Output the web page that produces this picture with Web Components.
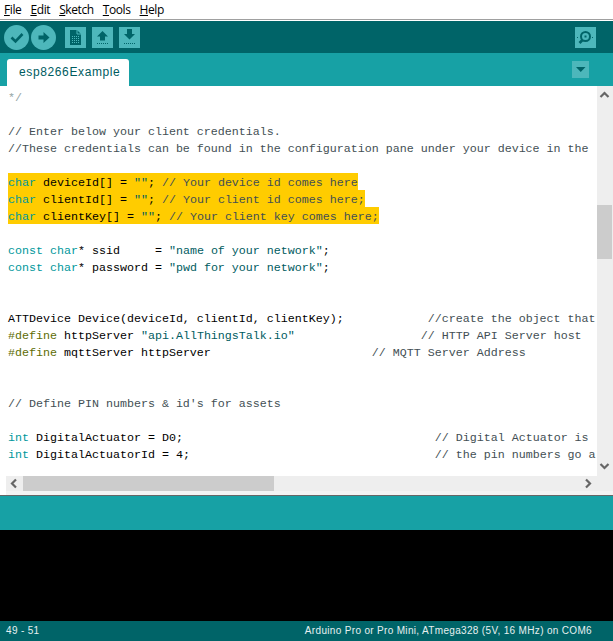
<!DOCTYPE html>
<html>
<head>
<meta charset="utf-8">
<title>esp8266Example</title>
<style>
  html, body { margin: 0; padding: 0; background: #fff; overflow: hidden; }
  arduino-ide { display: flex; }
  u { text-underline-offset: 1px; }
</style>
</head>
<body>
<arduino-ide>
  <ide-menubar>
    <ide-menu><u>F</u>ile</ide-menu>
    <ide-menu><u>E</u>dit</ide-menu>
    <ide-menu><u>S</u>ketch</ide-menu>
    <ide-menu><u>T</u>ools</ide-menu>
    <ide-menu><u>H</u>elp</ide-menu>
  </ide-menubar>
  <ide-toolbar></ide-toolbar>
  <ide-tabs>esp8266Example</ide-tabs>
  <ide-editor></ide-editor>
  <ide-hscroll></ide-hscroll>
  <ide-message></ide-message>
  <ide-console></ide-console>
  <ide-status>
    <span>49 - 51</span>
    <span slot="board">Arduino Pro or Pro Mini, ATmega328 (5V, 16 MHz) on COM6</span>
  </ide-status>
</arduino-ide>

<script>
const define = (name, css, html) => {
  customElements.define(name, class extends HTMLElement {
    constructor() {
      super();
      this.attachShadow({ mode: 'open' }).innerHTML = `<style>${css}</style>${html}`;
    }
  });
};

define('arduino-ide', `
  :host { display: flex; flex-direction: column; width: 613px; height: 641px; overflow: hidden; }
`, `<slot></slot>`);

define('ide-menubar', `
  :host {
    display: flex; gap: 9px; height: 19px; padding-left: 4px; box-sizing: content-box;
    background: #fff; color: #000; border-bottom: 1px solid #a0a0a0;
    font: 12px/19px "Open Sans", "Noto Sans", sans-serif; letter-spacing: -.4px;
  }
`, `<slot></slot>`);

define('ide-menu', `:host { display: block; }`, `<slot></slot>`);

const toolBtn = `
  .btn { width: 21px; height: 21px; background: #4db7bb; display: block; flex: none; }
  .round { width: 25px; height: 25px; display: block; flex: none; }
`;

define('ide-toolbar', toolBtn + `
  :host {
    display: flex; align-items: center; height: 32px; margin-top: 1px;
    padding: 0 17px 0 4px; background: #006468;
  }
  .r2 { margin-left: 2px; }
  .n { margin-left: 9px; }
  .u, .d { margin-left: 6px; }
  .sp { flex: 1; }
`, `
  <svg class="round" viewBox="0 0 25 25">
    <circle cx="12.5" cy="12.5" r="12.5" fill="#4db7bb"/>
    <path d="M7.5 12.5l4 4 7-7.5" fill="none" stroke="#006468" stroke-width="2.6"/>
  </svg>
  <svg class="round r2" viewBox="0 0 25 25">
    <circle cx="12.5" cy="12.5" r="12.5" fill="#4db7bb"/>
    <path d="M7.5 10.5h5V7l6 5.5-6 5.500V14.500h-5z" fill="#006468"/>
  </svg>
  <svg class="btn n" viewBox="0 0 21 21">
    <path d="M5 3h7l4 4v11H5z" fill="#006468"/>
    <path d="M12 3v4h4" fill="none" stroke="#4db7bb"/>
    <path d="M7 9.500h7M7 11.500h7M7 13.500h7M7 15.500h7" stroke="#4db7bb" stroke-dasharray="1 1"/>
  </svg>
  <svg class="btn u" viewBox="0 0 21 21">
    <path d="M10.500 4l5.500 5.500h-3v4h-5v-4h-3z" fill="#006468"/>
    <path d="M5 16.500h11" stroke="#006468" stroke-dasharray="1 1"/>
  </svg>
  <svg class="btn d" viewBox="0 0 21 21">
    <path d="M8 2h5v5h3l-5.500 5.500L5 7h3z" fill="#006468"/>
    <path d="M5 16.500h11" stroke="#006468" stroke-dasharray="1 1"/>
  </svg>
  <div class="sp"></div>
  <svg class="btn" viewBox="0 0 21 21">
    <circle cx="10.500" cy="9.500" r="4.500" fill="none" stroke="#006468" stroke-width="2"/>
    <rect x="9.500" y="8.500" width="2" height="2" fill="#006468"/>
    <path d="M7.500 13l-3 3" stroke="#006468" stroke-width="2.600"/>
    <path d="M2 10.500h2M17 10.500h2" stroke="#006468" stroke-dasharray="1 1"/>
  </svg>
`);

define('ide-tabs', `
  :host {
    display: flex; align-items: flex-end; justify-content: space-between;
    height: 33px; padding: 0 24px 0 7px; background: #17a1a5;
  }
  .tab {
    width: 122px; height: 27px; box-sizing: border-box; padding: 0 0 2px 12px;
    background: #fff; border-radius: 3px 3px 0 0; color: #005c5f;
    font: 12px/26px "Liberation Sans", Arial, sans-serif; letter-spacing: .62px;
  }
  .menu { width: 17px; height: 17px; margin-bottom: 8px; display: block; background: #4db7bb; }
`, `
  <div class="tab"><slot></slot></div>
  <svg class="menu" viewBox="0 0 17 17"><path d="M4 6h9.500l-4.750 5z" fill="#006468"/></svg>
`);

const kw = s => `<span class="k">${s}</span>`;
const cm = s => `<span class="c">${s}</span>`;
const st = s => `<span class="s">${s}</span>`;
const pp = s => `<span class="p">${s}</span>`;
const sp = n => ' '.repeat(n);
const line = (s, cls = '') => `<div class="l ${cls}">${s}</div>`;

const code = [
  line(`<span class="b">*/</span>`),
  line(''),
  line(cm(`// Enter below your client credentials.`)),
  line(cm(`//These credentials can be found in the configuration pane under your device in the`)),
  line(''),
  line(`${kw('char')} deviceId[] = ${st('""')}; ${cm('// Your device id comes here')}`, 'hl'),
  line(`${kw('char')} clientId[] = ${st('""')}; ${cm('// Your client id comes here;')}`, 'hl'),
  line(`${kw('char')} clientKey[] = ${st('""')}; ${cm('// Your client key comes here;')}`, 'hl'),
  line(''),
  line(`${kw('const')} ${kw('char')}* ssid     = ${st('"name of your network"')};`),
  line(`${kw('const')} ${kw('char')}* password = ${st('"pwd for your network"')};`),
  line(''),
  line(''),
  line(`ATTDevice Device(deviceId, clientId, clientKey);${sp(12)}${cm('//create the object that')}`),
  line(`${pp('#define')} httpServer ${st('"api.AllThingsTalk.io"')}${sp(18)}${cm('// HTTP API Server host')}`),
  line(`${pp('#define')} mqttServer httpServer${sp(23)}${cm('// MQTT Server Address')}`),
  line(''),
  line(''),
  line(cm(`// Define PIN numbers &amp; id's for assets`)),
  line(''),
  line(`${kw('int')} DigitalActuator = D0;${sp(36)}${cm('// Digital Actuator is')}`),
  line(`${kw('int')} DigitalActuatorId = 4;${sp(35)}${cm('// the pin numbers go a')}`),
].join('');

define('ide-editor', `
  :host { display: flex; height: 390px; background: #fff; }
  .code {
    flex: 1; min-width: 0; padding: 2px 0 0 8px; overflow: hidden;
    font: 11.67px/17px "Liberation Mono", "Courier New", monospace; color: #000;
  }
  .l { height: 17px; box-sizing: border-box; padding-top: 2px; white-space: pre; }
  .hl { width: fit-content; background: #fc0; }
  .k { color: #00979c; }
  .c { color: #434f54; }
  .b { color: #95a5a6; }
  .s { color: #005c5f; }
  .p { color: #5e6d03; }
  .bar { width: 16px; flex: none; background: #eee; display: flex; flex-direction: column; }
  .bar svg { display: block; width: 16px; height: 16px; flex: none; }
  .thumb { width: 15px; height: 54px; background: #ccc; margin-top: 103px; }
  .gap { flex: 1; }
`, `
  <div class="code">${code}</div>
  <div class="bar">
    <svg viewBox="0 0 16 16"><path d="M3.500 11l4-4 4 4" fill="none" stroke="#666" stroke-width="2.200"/></svg>
    <div class="thumb"></div>
    <div class="gap"></div>
    <svg viewBox="0 0 16 16"><path d="M3.500 4l4 4 4-4" fill="none" stroke="#666" stroke-width="2.200"/></svg>
  </div>
`);

define('ide-hscroll', `
  :host {
    display: flex; height: 15px; margin-left: 6px; background: #eee;
    border-bottom: 4px solid #f3f3f3; box-sizing: content-box;
  }
  svg { display: block; width: 17px; height: 15px; flex: none; }
  .thumb { width: 251px; background: #ccc; }
  .gap { flex: 1; }
`, `
  <svg viewBox="0 0 17 15"><path d="M10 3.500l-4 4 4 4" fill="none" stroke="#666" stroke-width="2.200"/></svg>
  <div class="thumb"></div>
  <div class="gap"></div>
  <svg viewBox="0 0 17 15" style="margin-right:16px"><path d="M6 3.500l4 4-4 4" fill="none" stroke="#666" stroke-width="2.200"/></svg>
`);

define('ide-message', `
  :host { display: block; flex: none; height: 34px; background: #17a1a5; border-top: 1px solid #666; }
`, ``);

define('ide-console', `:host { display: block; flex: 1; background: #000; }`, ``);

define('ide-status', `
  :host {
    display: flex; justify-content: space-between; align-items: center;
    height: 20px; padding: 0 21px 0 6px; background: #006468; color: #e6f0f0;
    font: 10px/20px "Liberation Sans", Arial, sans-serif; letter-spacing: .33px;
  }
`, `<slot></slot><slot name="board"></slot>`);
</script>
</body>
</html>
